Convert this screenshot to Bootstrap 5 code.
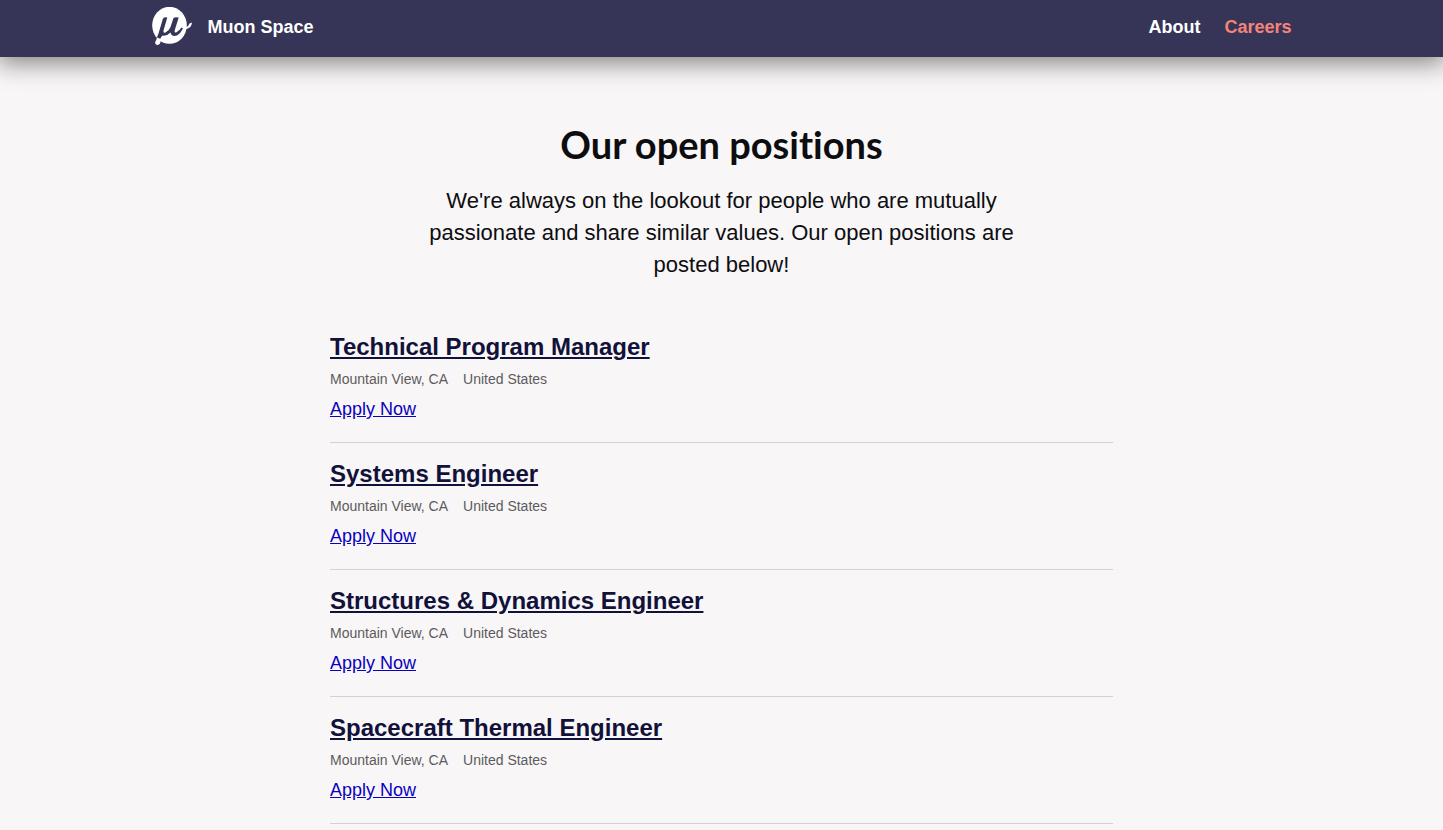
<!DOCTYPE html>
<html lang="en">
<head>
<meta charset="utf-8">
<meta name="viewport" content="width=device-width, initial-scale=1">
<title>Careers – Muon Space</title>
<link href="https://cdn.jsdelivr.net/npm/bootstrap@5.3.0/dist/css/bootstrap.min.css" rel="stylesheet">
<style>
  body { background: #f8f6f7; color: #0d0d10; font-family: "Liberation Sans", Arial, sans-serif; font-size: 18px; }
  .site-header { background: #363558; box-shadow: 0 4px 24px 2px rgba(20, 12, 12, .5); padding: 7px 0 10px; }
  .site-width { max-width: 1140px; }
  .site-header a { color: #fff; font-weight: 700; text-decoration: none; line-height: 24px; }
  .site-header a.current { color: #f48478; }
  .nav-gap { gap: 24px; }
  .intro { max-width: 600px; padding-top: 63px; }
  .intro h1 { font-family: Lato, sans-serif; font-size: 38px; font-weight: 700; font-variant-ligatures: none; line-height: 48px; margin-bottom: 17px; }
  .intro p { font-size: 22px; line-height: 32px; margin-bottom: 50px; }
  .jobs { max-width: 783px; }
  .job { border-bottom: 1px solid #d3d1d4; padding-bottom: 20px; margin-bottom: 15px; }
  .job h2 { font-size: 24px; font-weight: 700; line-height: 32px; margin: 0 0 4px; }
  .job h2 a { color: #12113a; }
  .job-place { color: #5c5b5e; font-size: 14px; line-height: 24px; gap: 15px; margin-bottom: 5px; }
  .apply { color: #0a00c0; display: block; width: fit-content; line-height: 26px; }
</style>
</head>
<body>
<header class="site-header position-relative">
  <nav class="container-fluid px-0 site-width d-flex align-items-center justify-content-between" aria-label="Main">
    <a href="#" class="d-flex align-items-center gap-3">
      <svg width="40" height="40" viewBox="0 0 40 40" aria-hidden="true">
        <ellipse cx="17.500" cy="18.300" rx="17.300" ry="18.500" fill="#fff"/>
        <path d="M27 23.500 Q29 20.500 32 20.500 Q36 20.500 37.500 16.500 L40 15.500 Q39.500 21 34 22 L30 24 Z" fill="#fff"/>
        <path d="M11 11.500 Q12.500 9.500 15.300 10.500 L11.500 23.500 Q11 26.500 13.500 25.500 Q17 24 18.500 20 L21.500 11 Q23 9.600 26.700 10.500 L22.800 23 Q21.800 26.500 24.500 25.300 Q27 24 29.500 20.500 L31 21.500 Q28.500 26.500 25 28.500 Q19.500 30.300 18.500 25.500 Q15 29.300 10.500 28.600 Q9 30 8.500 31.500 L3 35.500 L3 32 Q5.500 30.500 6.500 26.500 Z" fill="#363558"/>
        <path d="M5 30.500 L9 32 Q8.500 37.800 5.700 38 Q3 38 3.200 35 Q4.500 33 5 30.500 Z" fill="#fff"/>
      </svg>
      <span>Muon Space</span>
    </a>
    <div class="d-flex nav-gap">
      <a href="#">About</a>
      <a href="#" class="current" aria-current="page">Careers</a>
    </div>
  </nav>
</header>
<main class="px-3">
  <section class="intro mx-auto text-center">
    <h1>Our open positions</h1>
    <p>We're always on the lookout for people who are mutually passionate and share similar values. Our open positions are posted below!</p>
  </section>
  <section class="jobs mx-auto">
    <article class="job">
      <h2><a href="#">Technical Program Manager</a></h2>
      <div class="job-place d-flex"><span>Mountain View, CA</span><span>United States</span></div>
      <a href="#" class="apply">Apply Now</a>
    </article>
    <article class="job">
      <h2><a href="#">Systems Engineer</a></h2>
      <div class="job-place d-flex"><span>Mountain View, CA</span><span>United States</span></div>
      <a href="#" class="apply">Apply Now</a>
    </article>
    <article class="job">
      <h2><a href="#">Structures &amp; Dynamics Engineer</a></h2>
      <div class="job-place d-flex"><span>Mountain View, CA</span><span>United States</span></div>
      <a href="#" class="apply">Apply Now</a>
    </article>
    <article class="job mb-0">
      <h2><a href="#">Spacecraft Thermal Engineer</a></h2>
      <div class="job-place d-flex"><span>Mountain View, CA</span><span>United States</span></div>
      <a href="#" class="apply">Apply Now</a>
    </article>
  </section>
</main>
<script src="https://cdn.jsdelivr.net/npm/bootstrap@5.3.0/dist/js/bootstrap.bundle.min.js"></script>
</body>
</html>
